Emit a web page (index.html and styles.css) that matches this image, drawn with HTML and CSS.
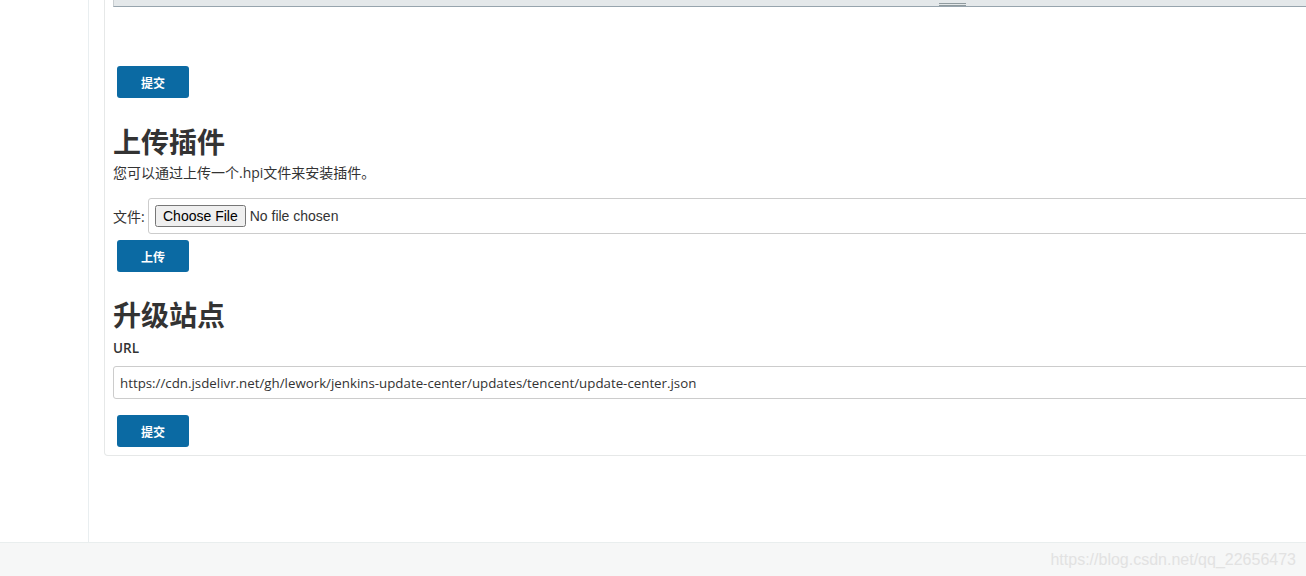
FILE: index.html
```html
<!DOCTYPE html>
<html>
<head>
<meta charset="utf-8">
<link rel="stylesheet" href="styles.css">
</head>
<body>
<div class="page">
  <div class="main">
    <div class="sidebar"></div>
    <div class="content">
      <div class="panel">
        <div class="textarea-tail"><span class="grip"></span></div>
        <button class="btn btn-first">提交</button>
        <h1 class="heading h-upload">上传插件</h1>
        <p class="desc">您可以通过上传一个.hpi文件来安装插件。</p>
        <div class="file-row">
          <span class="file-label">文件:</span>
          <div class="file-box"><input type="file" class="file-input"></div>
        </div>
        <button class="btn btn-upload">上传</button>
        <h1 class="heading h-site">升级站点</h1>
        <div class="label">URL</div>
        <div class="url-input">https://cdn.jsdelivr.net/gh/lework/jenkins-update-center/updates/tencent/update-center.json</div>
        <button class="btn btn-last">提交</button>
      </div>
    </div>
  </div>
  <div class="footer"><span class="watermark">https://blog.csdn.net/qq_22656473</span></div>
</div>
</body>
</html>
```
FILE: styles.css
```css
html, body {
  margin: 0;
  padding: 0;
  background: #fff;
}
body {
  font-family: "Open Sans", "Noto Sans CJK SC", sans-serif;
  color: #333;
  font-size: 13px;
}
.page {
  width: 1306px;
  height: 576px;
  overflow: hidden;
  display: flex;
  flex-direction: column;
}
.main {
  height: 542px;
  display: flex;
  flex: none;
}
.sidebar {
  width: 88px;
  flex: none;
  border-right: 1px solid #e9eef0;
}
.content {
  flex: 1;
  padding-left: 15px;
  overflow: hidden;
}
.panel {
  width: 1260px;
  border: 1px solid #e6e8e8;
  border-top: none;
  border-radius: 0 0 4px 4px;
  padding: 0 0 8px 8px;
}
.textarea-tail {
  height: 6px;
  background: #e4e8ea;
  border-left: 1px solid #c9ced1;
  border-bottom: 1px solid #97a4ad;
  position: relative;
}
.grip {
  position: absolute;
  left: 825px;
  top: 3px;
  width: 27px;
  height: 1px;
  border-top: 1px solid #8f9a9e;
  border-bottom: 1px solid #8f9a9e;
}
.btn {
  display: block;
  width: 72px;
  height: 32px;
  margin-left: 4px;
  background: #0b6aa3;
  color: #fff;
  border: none;
  border-radius: 3px;
  font-family: "Noto Sans CJK SC", sans-serif;
  font-weight: bold;
  font-size: 12px;
  padding: 0;
}
.btn-first { margin-top: 59px; }
.btn-upload { margin-top: 6px; }
.btn-last { margin-top: 16px; }
.heading {
  margin: 0;
  font-family: "Noto Sans CJK SC", sans-serif;
  font-size: 28px;
  line-height: 34px;
  font-weight: bold;
  color: #333;
}
.h-upload { margin-top: 26px; }
.h-site { margin-top: 25px; }
.desc {
  margin: 6px 0 0;
  line-height: 18px;
  font-size: 14px;
}
.file-row {
  margin-top: 16px;
  display: flex;
  align-items: center;
}
.file-label {
  font-size: 14px;
  width: 35px;
}
.file-box {
  flex: 1;
  height: 36px;
  box-sizing: border-box;
  border: 1px solid #cccccc;
  border-radius: 3px;
  display: flex;
  align-items: center;
  padding-left: 6px;
}
.file-input {
  font-family: "Liberation Sans", Arial, sans-serif;
  font-size: 14px;
  color: #333;
}
.label {
  margin-top: 8px;
  line-height: 18px;
  font-weight: 600;
  font-size: 13.5px;
}
.url-input {
  margin-top: 9px;
  height: 33px;
  box-sizing: border-box;
  border: 1px solid #cccccc;
  border-radius: 3px;
  padding-left: 6px;
  display: flex;
  align-items: center;
  font-size: 13.3px;
  color: #333;
}
.footer {
  flex: 1;
  background: #f6f7f7;
  border-top: 1px solid #e9eeee;
  display: flex;
  align-items: center;
  justify-content: flex-end;
  padding-right: 10px;
}
.watermark {
  font-family: "Liberation Sans", Arial, sans-serif;
  font-size: 16px;
  color: #e2e2e2;
}
```
